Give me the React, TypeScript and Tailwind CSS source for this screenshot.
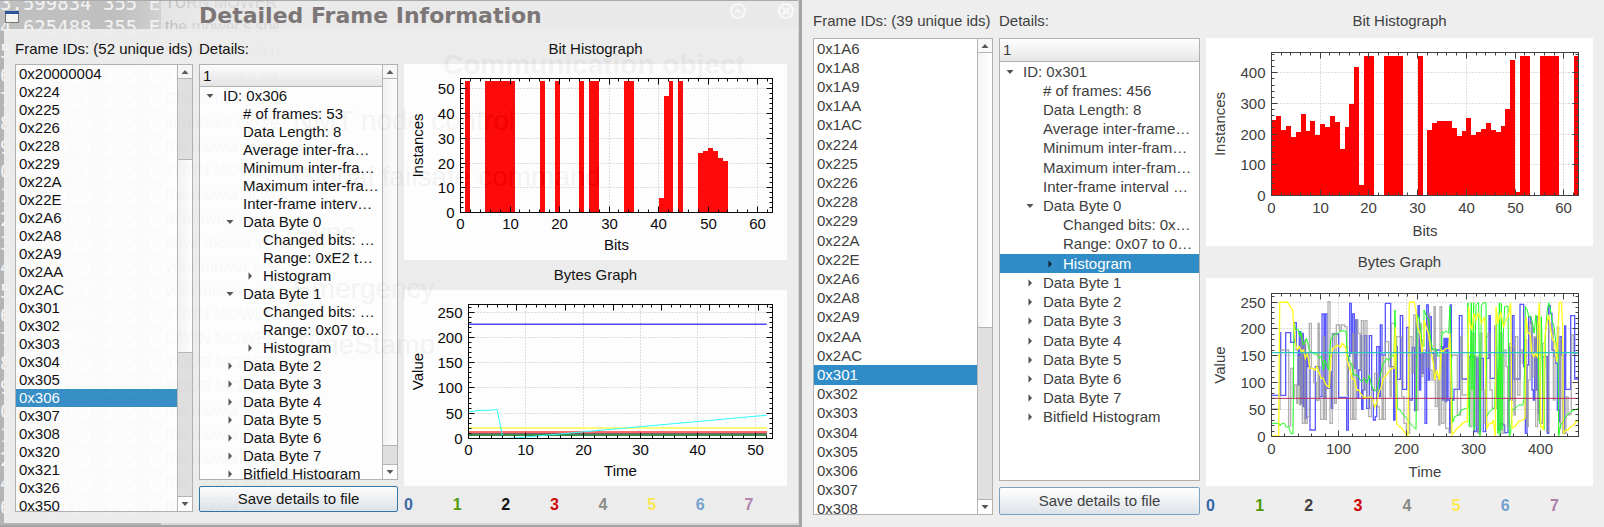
import React from "react";
import { ChevronUp, X } from "lucide-react";

type Pair = [number, number];
type Row = { text: string; depth: number; state?: "open" | "closed" };

const leftIds = "0x20000004 0x224 0x225 0x226 0x228 0x229 0x22A 0x22E 0x2A6 0x2A8 0x2A9 0x2AA 0x2AC 0x301 0x302 0x303 0x304 0x305 0x306 0x307 0x308 0x320 0x321 0x326 0x350".split(" ");
const rightIds = "0x1A6 0x1A8 0x1A9 0x1AA 0x1AC 0x224 0x225 0x226 0x228 0x229 0x22A 0x22E 0x2A6 0x2A8 0x2A9 0x2AA 0x2AC 0x301 0x302 0x303 0x304 0x305 0x306 0x307 0x308".split(" ");

const byteRows = (from: number): Row[] =>
  Array.from({ length: 8 - from }, (_, i) => ({ text: `Data Byte ${from + i}`, depth: 1, state: "closed" as const }));

const leftTree: Row[] = [
  { text: "ID: 0x306", depth: 0, state: "open" },
  { text: "# of frames: 53", depth: 1 },
  { text: "Data Length: 8", depth: 1 },
  { text: "Average inter-fra…", depth: 1 },
  { text: "Minimum inter-fra…", depth: 1 },
  { text: "Maximum inter-fra…", depth: 1 },
  { text: "Inter-frame interv…", depth: 1 },
  { text: "Data Byte 0", depth: 1, state: "open" },
  { text: "Changed bits: …", depth: 2 },
  { text: "Range: 0xE2 t…", depth: 2 },
  { text: "Histogram", depth: 2, state: "closed" },
  { text: "Data Byte 1", depth: 1, state: "open" },
  { text: "Changed bits: …", depth: 2 },
  { text: "Range: 0x07 to…", depth: 2 },
  { text: "Histogram", depth: 2, state: "closed" },
  ...byteRows(2),
  { text: "Bitfield Histogram", depth: 1, state: "closed" },
];

const rightTree: Row[] = [
  { text: "ID: 0x301", depth: 0, state: "open" },
  { text: "# of frames: 456", depth: 1 },
  { text: "Data Length: 8", depth: 1 },
  { text: "Average inter-frame…", depth: 1 },
  { text: "Minimum inter-fram…", depth: 1 },
  { text: "Maximum inter-fram…", depth: 1 },
  { text: "Inter-frame interval …", depth: 1 },
  { text: "Data Byte 0", depth: 1, state: "open" },
  { text: "Changed bits: 0x…", depth: 2 },
  { text: "Range: 0x07 to 0…", depth: 2 },
  { text: "Histogram", depth: 2, state: "closed" },
  ...byteRows(1),
  { text: "Bitfield Histogram", depth: 1, state: "closed" },
];

const leftBars: Pair[] = [
  [1, 53], [5, 53], [6, 53], [7, 53], [8, 53], [9, 53], [10, 53], [16, 53], [19, 53], [24, 53], [26, 53], [27, 53],
  [33, 53], [34, 53], [40, 6], [41, 47], [42, 53], [44, 53], [48, 24], [49, 25], [50, 26], [51, 25], [52, 22], [53, 21],
];
const rightBars: Pair[] = [
  245, 260, 215, 226, 192, 206, 267, 210, 243, 198, 232, 224, 260, 240, 153, 224, 297, 420, 33, 455, 455, 0, 0, 455, 455, 455, 455,
  0, 0, 0, 455, 0, 215, 236, 243, 243, 243, 219, 193, 210, 251, 197, 207, 216, 235, 215, 206, 226, 281, 443, 10, 455, 455, 0, 0,
  455, 455, 455, 455, 0, 0, 0, 455,
].map((v, i) => [i, v] as Pair);

/* Byte traces: x,y samples in thirds of a pixel; the second block continues 468 units later. */
const series = (a: string, b: string): Pair[] => {
  const read = (s: string, dx: number) =>
    s.trim().split(/\s+/).map((p) => {
      const [x, y] = p.split(",").map(Number);
      return [x + dx, y] as Pair;
    });
  return [...read(a, 0), ...read(b, 468)];
};
const stepPath = (p: Pair[]) => p.map(([x, y], i) => (i ? `H${x}V${y}` : `M${x} ${y}`)).join("");
const linePath = (p: Pair[]) => p.map(([x, y], i) => `${i ? "L" : "M"}${x} ${y}`).join("");

const blue = series(
  "10,316 36,128 38,316 53,128 68,157 79,98 85,180 90,285 94,125 98,340 102,130 106,350 109,165 112,385 116,190 120,230 126,420 142,230 155,320 162,72 168,325 172,72 177,295 186,245 190,355 194,132 212,322 231,322 236,420 241,200 245,40 250,190 254,72 259,235 263,90 267,325 272,240 279,137 281,358 285,300 290,137 296,355 304,137 311,300 316,390 322,380 326,170 333,320 337,105 342,195 352,40 368,230 377,390 381,170 388,268 397,77 404,298 416,112 422,330 433,172 440,362 445,80 450,47 454,300 458,150 462,250 466,190",
  "3,400 8,45 13,270 17,80 22,190 30,260 36,180 52,170 56,330 60,145 64,335 68,145 72,330 77,428 79,45 82,330 90,298 103,298 106,77 114,267 128,267 134,200 140,200 152,425 158,205 163,425 170,205 178,425 185,205 192,205 195,77 199,265 210,265 213,108 217,320 222,420 228,400 236,405 242,428 252,330 257,173 262,330 265,77 270,267 285,267 288,43 299,230 304,430 309,225 314,80 320,100 324,300 328,330 332,145 336,300 339,80 343,370 349,400 356,200 364,200 370,430 374,47 379,70 384,180 390,200 396,220 400,360 404,395 408,140 413,195 417,430 422,108 425,298 435,298 440,77 452,267 463,267",
);
const gray = series(
  "10,357 36,180 62,408 68,235 75,320 80,285 86,340 90,200 95,345 99,130 103,400 109,150 113,400 118,380 124,100 130,235 137,278 145,332 150,100 154,330 158,388 166,140 170,388 175,290 180,35 186,400 193,130 200,340 205,105 215,120 220,105 230,110 237,315 240,220 248,388 254,130 258,388 264,90 270,130 276,240 280,92 286,300 291,92 297,325 302,380 310,300 320,250 328,350 334,388 342,200 346,388 352,155 362,230 366,320 370,100 378,100 382,350 386,140 397,140 401,320 408,400 415,430 422,430 425,140 432,250 437,75 443,360 450,130 456,100 460,260 465,180",
  "5,230 12,70 17,240 24,270 30,50 34,350 40,260 44,405 48,50 53,400 60,180 65,415 75,428 80,200 85,195 97,195 100,375 107,375 110,140 115,315 128,315 133,205 138,410 144,130 150,405 156,200 162,430 168,130 174,300 180,400 188,140 192,130 198,300 205,355 213,355 218,240 222,410 228,130 234,430 240,180 246,230 251,410 256,160 262,170 270,375 274,140 281,315 288,180 295,220 303,150 308,410 313,270 318,95 324,260 330,140 335,410 341,100 345,390 350,400 356,160 362,200 368,425 374,100 380,120 388,330 393,200 400,110 404,415 410,145 415,330 420,430 426,320 432,375 437,372 442,135 448,190 463,190",
);
const green = series(
  "10,400 34,400 36,408 40,401 50,401 55,412 62,410 68,430 75,432 78,98 84,120 90,118 96,140 98,125 106,165 116,145 124,180 134,190 146,192 154,205 160,198 166,240 170,210 182,240 188,150 196,135 210,130 216,123 234,123 238,190 246,215 252,225 256,255 268,255 280,275 290,265 296,280 304,255 310,285 318,302 328,300 336,260 344,225 356,205 362,212 370,195 378,200 381,60 388,355 396,360 406,375 416,385 426,400 436,410 444,418 448,75 454,85 462,160 468,170",
  "0,60 6,75 14,90 20,150 26,180 36,175 42,200 52,190 54,125 60,130 66,122 74,130 78,48 82,200 86,398 92,380 104,375 110,362 124,355 132,355 132,38 136,410 142,38 144,300 149,38 150,420 156,45 164,38 168,438 172,48 178,38 186,38 188,380 196,365 206,358 212,350 218,100 222,430 226,38 228,438 232,40 234,420 238,130 242,50 252,48 256,438 260,430 264,360 274,355 284,345 296,345 300,330 304,50 310,60 314,80 320,78 326,100 330,130 336,75 342,180 348,400 352,80 360,420 364,130 370,60 374,38 378,50 384,90 390,110 396,160 402,180 404,438 410,405 420,390 430,375 440,365 452,360 463,355",
);
const yellow = series(
  "10,438 32,438 35,37 58,36 64,45 74,60 76,90 84,170 88,180 94,170 100,185 106,180 112,205 118,190 126,235 134,235 142,240 146,230 154,250 160,265 166,265 174,285 184,292 188,205 194,175 204,170 208,165 218,172 222,160 232,170 238,210 246,240 252,265 260,270 266,300 272,300 278,310 288,325 292,320 298,325 306,320 314,325 320,352 326,340 332,310 340,290 346,265 356,255 362,245 370,235 378,235 382,110 386,400 392,408 400,412 410,428 420,438 424,37 438,36 444,60 448,110 456,130 462,190 468,140",
  "0,90 6,110 14,130 20,180 28,220 32,270 38,240 46,270 52,180 56,185 66,175 74,175 78,130 84,435 92,425 98,415 108,410 114,400 124,395 130,395 134,50 138,100 144,120 150,70 156,90 162,70 168,80 172,100 182,80 188,415 196,400 204,400 208,390 214,440 216,50 222,100 230,65 238,110 246,90 254,75 260,38 264,415 272,410 284,395 296,390 303,385 306,80 312,130 318,130 324,190 330,200 334,190 340,200 342,100 346,38 350,410 354,410 358,420 362,150 368,100 374,75 380,120 386,150 392,155 398,215 402,120 406,38 412,36 416,110 418,430 426,420 432,420 440,410 450,405 455,395 463,395",
);

type PlotProps = {
  w: number;
  h: number;
  box: [number, number, number, number];
  xMax: number;
  yMax: number;
  xStep: number;
  yStep: number;
  yMinor: number;
  xLabel: string;
  yLabel: string;
  ink: string;
  tickDrop: number;
  labelDrop: number;
  topMax?: number;
  children?: React.ReactNode;
};

const upTo = (max: number, step: number) => Array.from({ length: Math.floor(max / step) + 1 }, (_, i) => i * step);

function Plot({ w, h, box, xMax, yMax, xStep, yStep, yMinor, xLabel, yLabel, ink, tickDrop, labelDrop, topMax = 63, children }: PlotProps) {
  const [x0, y0, x1, y1] = box;
  const px = (v: number, max = xMax) => Math.round(x0 + (v / max) * (x1 - x0) - 0.5) + 0.5;
  const py = (v: number) => Math.round(y1 - (v / yMax) * (y1 - y0) - 0.5) + 0.5;
  return (
    <svg
      viewBox={`0 0 ${w} ${h}`}
      className="block h-auto w-full bg-white"
      role="img"
      aria-label={`${yLabel} / ${xLabel}`}
      fontFamily="'Liberation Sans', Arial, sans-serif"
      fontSize="15"
      fill={ink}
    >
      <g stroke="#bdbdbd" strokeDasharray="1 2">
        {upTo(xMax, xStep).slice(1).map((v) => <line key={`x${v}`} x1={px(v)} x2={px(v)} y1={y0} y2={y1} />)}
        {upTo(yMax, yStep).slice(1).map((v) => <line key={`y${v}`} x1={x0} x2={x1} y1={py(v)} y2={py(v)} />)}
      </g>
      {children}
      <g stroke={ink} fill="none">
        <rect x={x0} y={y0} width={x1 - x0} height={y1 - y0} />
        {upTo(xMax, xStep / 5).map((v, i) => (
          <line key={`b${v}`} x1={px(v)} x2={px(v)} y1={y1} y2={y1 - (i % 5 ? 3 : 6)} />
        ))}
        {upTo(topMax, 2).map((v, i) => (
          <line key={`t${v}`} x1={px(v, topMax)} x2={px(v, topMax)} y1={y0} y2={y0 + (i % 5 ? 3 : 6)} />
        ))}
        {upTo(yMax, yMinor).map((v, i) => {
          const len = i % 5 ? 3 : 6;
          return <path key={`s${v}`} d={`M${x0} ${py(v)}h${len}M${x1} ${py(v)}h${-len}`} />;
        })}
      </g>
      <g textAnchor="middle">
        {upTo(xMax, xStep).map((v) => <text key={v} x={px(v)} y={y1 + tickDrop}>{v}</text>)}
        <text x={(x0 + x1) / 2} y={y1 + labelDrop}>{xLabel}</text>
        <text transform={`translate(19 ${(y0 + y1) / 2}) rotate(-90)`}>{yLabel}</text>
      </g>
      <g textAnchor="end">
        {upTo(yMax, yStep).map((v) => <text key={v} x={x0 - 6} y={py(v) + 5}>{v}</text>)}
      </g>
    </svg>
  );
}

function Bars({ data, box, yMax }: { data: Pair[]; box: [number, number, number, number]; yMax: number }) {
  const [x0, y0, x1, y1] = box;
  const unit = (x1 - x0) / 63;
  return (
    <g fill="#ff0000" shapeRendering="crispEdges">
      {data.map(([i, v]) => {
        const hgt = (v / yMax) * (y1 - y0);
        return <rect key={i} x={x0 + i * unit} y={y1 - hgt} width={unit} height={hgt} />;
      })}
    </g>
  );
}

const Triangle = ({ dir }: { dir: "up" | "down" | "right" }) => (
  <svg viewBox="0 0 8 8" className="size-2 shrink-0" aria-hidden="true" fill="currentColor">
    {dir === "up" && <path d="M4 2 7.5 6h-7z" />}
    {dir === "down" && <path d="M4 6 .5 2h7z" />}
    {dir === "right" && <path d="M6 4 2.5 7.7V.3z" />}
  </svg>
);

function ScrollBar({ before, thumb, after }: { before: string; thumb: string; after: string }) {
  return (
    <div className="flex w-[15px] shrink-0 flex-col border-l border-[#b4b4b4] bg-[#e0e0e0] text-[#555]">
      <button type="button" aria-label="Scroll up" className="flex h-[14px] shrink-0 items-center justify-center border-b border-[#b4b4b4] bg-[#f8f8f8]">
        <Triangle dir="up" />
      </button>
      <div className={before} />
      <div className={`border-[#b4b4b4] bg-linear-to-r from-[#f4f4f4] to-white ${thumb}`} />
      <div className={after} />
      <button type="button" aria-label="Scroll down" className="flex h-[15px] shrink-0 items-center justify-center border-t border-[#b4b4b4] bg-white">
        <Triangle dir="down" />
      </button>
    </div>
  );
}

function IdList({ ids, selected, size, rows, bar }: { ids: string[]; selected: string; size: string; rows: string; bar: React.ReactNode }) {
  return (
    <div className={`flex overflow-hidden border border-[#b0b0b0] bg-white ${size}`}>
      <ul role="listbox" aria-label="Frame IDs" className={`grid min-w-0 flex-1 auto-rows-fr ${rows}`}>
        {ids.map((id) => (
          <li
            key={id}
            role="option"
            aria-selected={id === selected}
            className={`flex items-center pl-[3px] ${id === selected ? "bg-[#308cc6] text-white" : ""}`}
          >
            {id}
          </li>
        ))}
      </ul>
      {bar}
    </div>
  );
}

const indent = ["pl-[6px]", "pl-[26px]", "pl-[46px]"];

function Tree({ rows, selected, size, header, body, bar }: { rows: Row[]; selected?: number; size: string; header: string; body: string; bar?: React.ReactNode }) {
  return (
    <div className={`flex overflow-hidden border border-[#b0b0b0] bg-white ${size}`}>
      <div className="min-w-0 flex-1">
        <div className={`flex items-center border-b border-[#b0b0b0] bg-linear-to-b from-white to-[#e6e6e6] pl-[3px] ${header}`}>1</div>
        <ul role="tree" aria-label="Details" className={`grid auto-rows-fr ${body}`}>
          {rows.map((r, i) => (
            <li
              key={i}
              role="treeitem"
              aria-expanded={r.state ? r.state === "open" : undefined}
              aria-selected={i === selected}
              className={`flex items-center whitespace-nowrap ${indent[r.depth]} ${i === selected ? "bg-[#308cc6] text-white" : ""}`}
            >
              <span className={`flex w-[17px] shrink-0 ${i === selected ? "text-[#112233]" : "text-[#505050]"}`}>
                {r.state && <Triangle dir={r.state === "open" ? "down" : "right"} />}
              </span>
              {r.text}
            </li>
          ))}
        </ul>
      </div>
      {bar}
    </div>
  );
}

const legendColors = [
  "text-[#3465a4]", "text-[#4e9a06]", "text-current", "text-[#cc0000]",
  "text-[#888a85]", "text-[#fce94f]", "text-[#729fcf]", "text-[#ad7fa8]",
];

const Legend = ({ className }: { className: string }) => (
  <div className={`-mr-[6px] grid grid-cols-8 text-base font-bold ${className}`}>
    {legendColors.map((c, i) => <span key={i} className={c}>{i}</span>)}
  </div>
);

const SaveButton = ({ className }: { className: string }) => (
  <button type="button" className={`w-full rounded-[2px] border bg-linear-to-b from-white to-[#dde3e9] ${className}`}>
    Save details to file
  </button>
);

const dumpRows = [
  "3.599834", "4.625488", "5.650132", "6.674121", "7.699121", "8.724706", "9.749970", "0.774731", "1.799425", "2.825500", "3.850215",
  "4.874659", "5.899647", "6.924644", "7.949294", "8.975165", "9.000162", "0.025199", "1.049949", "2.074599", "4.024563", "6.049814",
];
const noteRows = [
  "TURN MOWER…", "the mower's spe…", "the mower will n…", "The mower's saf…", "Check mower…", "important mower", "the mower is on",
  "TURN MOWER", "the mower. It will", "of mower).", "drive mower w…", "your mower and", "void mower", "TURN MOWER", "LAWN MOWER",
  "YOUR MOWER", "YOUR MOWER", "the mower with t…", "the mower with t…", "the mower p…", "the mower with…", "the mower with…",
];

/* Windows lying behind the translucent dialog. */
function Backdrop() {
  return (
    <div aria-hidden="true" className="pointer-events-none absolute inset-0 flex overflow-hidden border-r-[3px] border-b-2 border-[#a4a4a4] whitespace-nowrap">
      <div className="w-[161px] shrink-0 overflow-hidden bg-[#b4b4b4] font-['DejaVu_Sans_Mono',monospace] text-[19px] leading-6 text-[#f4f4f4]">
        <div className="-mt-[9px]">
          {dumpRows.map((r) => <div key={r} className="whitespace-pre">{r} 355 E0</div>)}
        </div>
      </div>
      <div className="w-[118px] shrink-0 overflow-hidden bg-[#d8d8d8] text-base leading-6 text-[#808080]">
        <div className="-mt-[9px] pl-1">
          {noteRows.map((r, i) => <div key={i}>{r}</div>)}
        </div>
      </div>
      <div className="w-[14px] shrink-0 bg-[#d8d8d8]" />
      <div className="flex-1 bg-[#d8d8d8] pt-[37px] text-[28px] leading-[56px] text-[#202020]">
        <div className="pl-[150px] font-bold">Communication object</div>
        <div>NMT node control</div>
        <div>Global failsafe command</div>
        <div>Sync</div>
        <div>Emergency</div>
        <div>TimeStamp</div>
      </div>
    </div>
  );
}

const boxA: [number, number, number, number] = [56.5, 14.5, 368.5, 148.5];
const boxB: [number, number, number, number] = [64.5, 14.5, 368.5, 148.5];
const boxC: [number, number, number, number] = [65.5, 14.5, 372.5, 157.5];
const boxD: [number, number, number, number] = [65.5, 15.5, 372.5, 158.5];

export default function App() {
  const bx = (t: number) => boxB[0] + (t / 53) * (boxB[2] - boxB[0]);
  const by = (v: number) => boxB[3] - (v / 265) * (boxB[3] - boxB[1]);
  const cyan: Pair[] = [[0, 53], [2, 55.5], [4, 56], [5, 57.5], [6, 0], [8, 1], [16, 9], [52, 46]];
  return (
    <main className="grid min-h-screen grid-cols-2 bg-[#eeeeee] font-['Liberation_Sans',Arial,sans-serif] text-[15px] leading-[18px]">
      <section className="relative flex flex-col px-1 pb-1 text-[#0a0a0a]">
        <Backdrop />
        <header className="relative -ml-1 flex h-[29px] items-center border-t border-[#aaa] bg-linear-to-r from-[#eeeeee]/20 from-15% to-[#eeeeee]/80 to-25% pr-1 pl-[5px]">
          <svg viewBox="0 0 14 12" className="mt-1 h-3 w-[14px]" aria-hidden="true">
            <rect x=".5" y=".5" width="13" height="11" fill="#f3f4f0" stroke="#777" />
            <path d="M0 0h14v3H0z" fill="#2c559b" />
          </svg>
          <h1 className="flex-1 pt-[2px] pl-[180px] font-['DejaVu_Sans',sans-serif] text-[22px] font-bold whitespace-nowrap text-[#7d7676]">
            Detailed Frame Information
          </h1>
          <div className="flex gap-8 pb-2 text-[#f8f8f8]">
            <button type="button" aria-label="Shade" className="flex size-4 items-center justify-center rounded-full border-2 border-[#f8f8f8]">
              <ChevronUp className="size-3" strokeWidth={3} />
            </button>
            <button type="button" aria-label="Close" className="flex size-4 items-center justify-center rounded-full border-2 border-[#f8f8f8]">
              <X className="size-3" strokeWidth={4} />
            </button>
          </div>
        </header>
        <div className="relative flex flex-1 gap-[6px] bg-[#eeeeee] px-[11px] pt-[5px] opacity-95">
          <div className="w-[178px] shrink-0">
            <h2 className="flex h-[30px] items-center whitespace-nowrap">Frame IDs: (52 unique ids)</h2>
            <IdList
              ids={leftIds}
              selected="0x306"
              size="h-[448px]"
              rows="h-[450px]"
              bar={<ScrollBar before="h-[80px]" thumb="h-[194px] border-y" after="flex-1" />}
            />
          </div>
          <div className="w-[199px] shrink-0">
            <h2 className="flex h-[30px] items-center">Details:</h2>
            <Tree
              rows={leftTree}
              size="h-[416px]"
              header="h-[22px]"
              body="h-[396px]"
              bar={<ScrollBar before="h-0" thumb="flex-1 border-b" after="h-[18px]" />}
            />
            <SaveButton className="mt-[6px] h-[26px] border-[#2a72a5]" />
          </div>
          <div className="min-w-0 flex-1">
            <h2 className="flex h-[30px] items-center justify-center">Bit Histograph</h2>
            <Plot w={383} h={196} box={boxA} xMax={63} yMax={54.2} xStep={10} yStep={10} yMinor={2} xLabel="Bits" yLabel="Instances" ink="#000" tickDrop={16} labelDrop={37}>
              <Bars data={leftBars} box={boxA} yMax={54.2} />
            </Plot>
            <h2 className="flex h-[30px] items-center justify-center">Bytes Graph</h2>
            <Plot w={383} h={196} box={boxB} xMax={53} yMax={265} xStep={10} yStep={50} yMinor={10} xLabel="Time" yLabel="Value" ink="#000" tickDrop={16} labelDrop={37}>
              <g fill="none">
                <path d={`M65 ${by(226)}H${bx(52)}`} stroke="#4444ff" strokeWidth="1.5" />
                <path d={`M65 ${by(21)}H${bx(52)}`} stroke="#ffff4d" strokeWidth="1.5" />
                <path d="M65 142H363" stroke="#ff6666" strokeWidth="2" />
                <path d="M65 143.5H363" stroke="#8a5060" />
                <path d="M65 145H363" stroke="#2f8a45" strokeWidth="2" />
                <path d={linePath(cyan.map(([t, v]) => [bx(t), by(v)] as Pair))} stroke="#22ffff" />
              </g>
            </Plot>
            <Legend className="pt-[7px]" />
          </div>
        </div>
      </section>

      <section className="flex gap-[6px] px-[11px] pt-1 text-[#404040]">
        <div className="w-[180px] shrink-0">
          <h2 className="flex h-[34px] items-center whitespace-nowrap">Frame IDs: (39 unique ids)</h2>
          <IdList
            ids={rightIds}
            selected="0x301"
            size="h-[477px]"
            rows="h-[480px]"
            bar={<ScrollBar before="h-0" thumb="h-[275px] border-b" after="flex-1" />}
          />
        </div>
        <div className="w-[201px] shrink-0">
          <h2 className="flex h-[34px] items-center">Details:</h2>
          <Tree rows={rightTree} selected={10} size="h-[443px]" header="h-[23px]" body="h-[365px]" />
          <SaveButton className="mt-[6px] h-[28px] border-[#7d9fc0]" />
        </div>
        <div className="min-w-0 flex-1">
          <h2 className="flex h-[34px] items-center justify-center">Bit Histograph</h2>
          <Plot w={387} h={208} box={boxC} xMax={63} yMax={466} xStep={10} yStep={100} yMinor={20} xLabel="Bits" yLabel="Instances" ink="#404040" tickDrop={17} labelDrop={40}>
            <Bars data={rightBars} box={boxC} yMax={466} />
          </Plot>
          <h2 className="flex h-8 items-center justify-center">Bytes Graph</h2>
          <Plot w={387} h={208} box={boxD} xMax={456} yMax={266} xStep={100} yStep={50} yMinor={10} xLabel="Time" yLabel="Value" ink="#404040" tickDrop={17} labelDrop={40}>
            <g transform="translate(62 12) scale(.33333)" fill="none" strokeWidth="3">
              <path d={stepPath(blue)} stroke="#3c3cff" strokeOpacity=".85" strokeWidth="4" />
              <path d={stepPath(gray)} stroke="#989898" strokeOpacity=".75" strokeWidth="4" />
              <path d={linePath(green)} stroke="#1cff1c" />
              <path d={linePath(yellow)} stroke="#ffff20" strokeWidth="4" />
              <path d="M10 188H931" stroke="#2fc4c4" strokeWidth="4" />
              <path d="M10 325H931" stroke="#b03060" />
            </g>
          </Plot>
          <Legend className="pt-2" />
        </div>
      </section>
    </main>
  );
}
